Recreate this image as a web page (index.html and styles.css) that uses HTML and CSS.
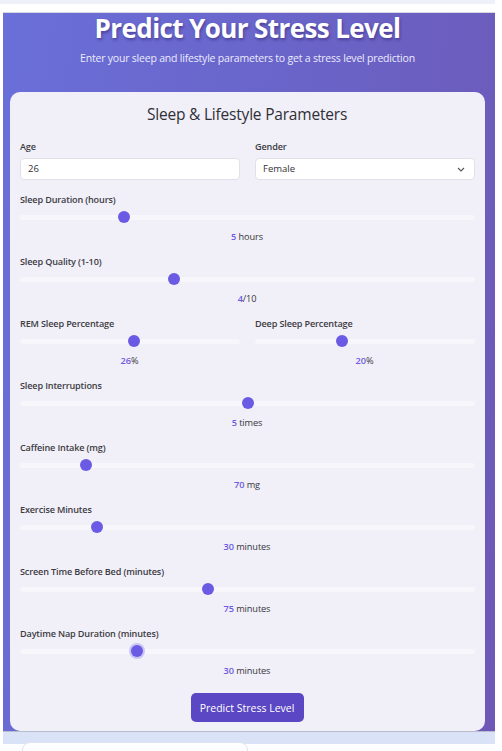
FILE: index.html
```html
<!DOCTYPE html>
<html>
<head>
<meta charset="utf-8">
<link rel="stylesheet" href="styles.css">
</head>
<body>
<div class="topstrip"></div>
<div class="page">
  <section class="hero">
    <h1 class="title">Predict Your Stress Level</h1>
    <p class="subtitle">Enter your sleep and lifestyle parameters to get a stress level prediction</p>
    <div class="card">
      <h2 class="card-title">Sleep &amp; Lifestyle Parameters</h2>
      <div class="row two">
        <div class="field">
          <label class="label">Age</label>
          <div class="input">26</div>
        </div>
        <div class="field">
          <label class="label">Gender</label>
          <div class="input select">Female
            <svg class="chev" width="8" height="5" viewBox="0 0 8 5"><path d="M1 1l3 3 3-3" fill="none" stroke="#555" stroke-width="1.1"/></svg>
          </div>
        </div>
      </div>
      <div class="field">
        <label class="label">Sleep Duration (hours)</label>
        <input class="range" type="range" min="3" max="12" step="0.1" value="4.97">
        <div class="value"><b>5</b> hours</div>
      </div>
      <div class="field">
        <label class="label">Sleep Quality (1-10)</label>
        <input class="range" type="range" min="1" max="10" value="4">
        <div class="value"><b>4</b>/10</div>
      </div>
      <div class="row two">
        <div class="field">
          <label class="label">REM Sleep Percentage</label>
          <input class="range" type="range" min="0" max="100" value="52">
          <div class="value"><b>26</b>%</div>
        </div>
        <div class="field">
          <label class="label">Deep Sleep Percentage</label>
          <input class="range" type="range" min="0" max="100" value="39.4">
          <div class="value"><b>20</b>%</div>
        </div>
      </div>
      <div class="field">
        <label class="label">Sleep Interruptions</label>
        <input class="range" type="range" min="0" max="10" value="5">
        <div class="value"><b>5</b> times</div>
      </div>
      <div class="field">
        <label class="label">Caffeine Intake (mg)</label>
        <input class="range" type="range" min="0" max="500" value="68">
        <div class="value"><b>70</b> mg</div>
      </div>
      <div class="field">
        <label class="label">Exercise Minutes</label>
        <input class="range" type="range" min="0" max="180" value="29">
        <div class="value"><b>30</b> minutes</div>
      </div>
      <div class="field">
        <label class="label">Screen Time Before Bed (minutes)</label>
        <input class="range" type="range" min="0" max="180" value="74">
        <div class="value"><b>75</b> minutes</div>
      </div>
      <div class="field">
        <label class="label">Daytime Nap Duration (minutes)</label>
        <input class="range focus" type="range" min="0" max="120" value="29.5">
        <div class="value"><b>30</b> minutes</div>
      </div>
      <div class="actions">
        <button class="btn">Predict Stress Level</button>
      </div>
    </div>
  </section>
  <div class="below">
    <div class="peek"></div>
  </div>
</div>
</body>
</html>
```
FILE: styles.css
```css
* { box-sizing: border-box; }
html, body { margin: 0; padding: 0; background: #ffffff; }
body {
  font-family: "Open Sans", "Noto Sans", sans-serif;
  color: #333;
  width: 502px;
  height: 751px;
  overflow: hidden;
}
.topstrip {
  width: 495px;
  height: 4px;
  background: #eef1f9;
}
.page {
  margin-top: 8px;
  width: 495px;
}
.hero {
  margin-left: 3px;
  width: 492px;
  border-top: 1px solid #d8d8e0;
  border-bottom: 1px solid #b9bccb;
  background: linear-gradient(100deg, #6a6fd9 0%, #6a64c8 50%, #6d58b6 100%);
  padding: 0 10px 0 7px;
  display: flex;
  flex-direction: column;
  align-items: stretch;
}
.title {
  margin: 0;
  text-align: center;
  color: #fff;
  font-size: 26px;
  font-weight: 700;
  line-height: 30px;
  letter-spacing: -0.6px;
  text-shadow: 1px 2px 3px rgba(40, 20, 90, 0.45);
}
.subtitle {
  margin: 7px 0 0 0;
  text-align: center;
  color: #ecebfb;
  font-size: 10.5px;
  letter-spacing: -0.2px;
  line-height: 16px;
}
.card {
  margin-top: 26px;
  background: #f1eff8;
  border-radius: 10px;
  padding: 11px 10px 9px 9px;
  display: flex;
  flex-direction: column;
}
.card-title {
  margin: 0 0 14.5px 0;
  text-align: center;
  font-size: 15.5px;
  font-weight: 500;
  letter-spacing: -0.2px;
  line-height: 22px;
  color: #2f2f36;
}
.row.two {
  display: grid;
  grid-template-columns: 1fr 1fr;
  column-gap: 14px;
}
.field {
  display: flex;
  flex-direction: column;
}
.label {
  font-size: 9.1px;
  font-weight: 600;
  letter-spacing: -0.15px;
  line-height: 13px;
  color: #3c3c43;
  margin-left: 1px;
}
.input {
  margin-top: 5.5px;
  margin-left: 1px;
  height: 22px;
  background: #fff;
  border: 1px solid #e2e1ea;
  border-radius: 4px;
  font-size: 9.5px;
  line-height: 20px;
  padding-left: 7px;
  color: #333;
  margin-bottom: 12.5px;
}
.select {
  display: flex;
  justify-content: space-between;
  align-items: center;
  padding-right: 9px;
}
.range {
  -webkit-appearance: none;
  appearance: none;
  margin: 5.5px 0 0 1px;
  width: calc(100% - 1px);
  height: 12px;
  background: transparent;
  outline: none;
}
.range::-webkit-slider-runnable-track {
  height: 5px;
  background: #f7f6fb;
  border-radius: 3px;
}
.range::-webkit-slider-thumb {
  -webkit-appearance: none;
  width: 12px;
  height: 12px;
  border-radius: 50%;
  background: #6b5be4;
  margin-top: -3.5px;
  border: none;
}
.range.focus::-webkit-slider-thumb {
  box-shadow: 0 0 0 2px #c9c6f2;
}
.value {
  margin-top: 6.5px;
  text-align: center;
  font-size: 9.2px;
  letter-spacing: -0.1px;
  line-height: 13px;
  color: #36363c;
  margin-bottom: 12px;
}
.value b {
  color: #6b5be4;
  font-weight: 600;
}
.actions {
  display: flex;
  justify-content: center;
  margin-top: 4.5px;
}
.btn {
  font-family: inherit;
  width: 113px;
  height: 29px;
  background: #5b47c3;
  color: #fff;
  border: none;
  border-radius: 5px;
  font-size: 10.5px;
}
.below {
  margin-left: 3px;
  width: 492px;
  height: 12px;
  background: #d9e2f6;
  position: relative;
}
.peek {
  position: absolute;
  left: 19px;
  top: 10px;
  width: 226px;
  height: 20px;
  background: #fff;
  border: 1px solid #dfe3ee;
  border-radius: 8px;
}
```
